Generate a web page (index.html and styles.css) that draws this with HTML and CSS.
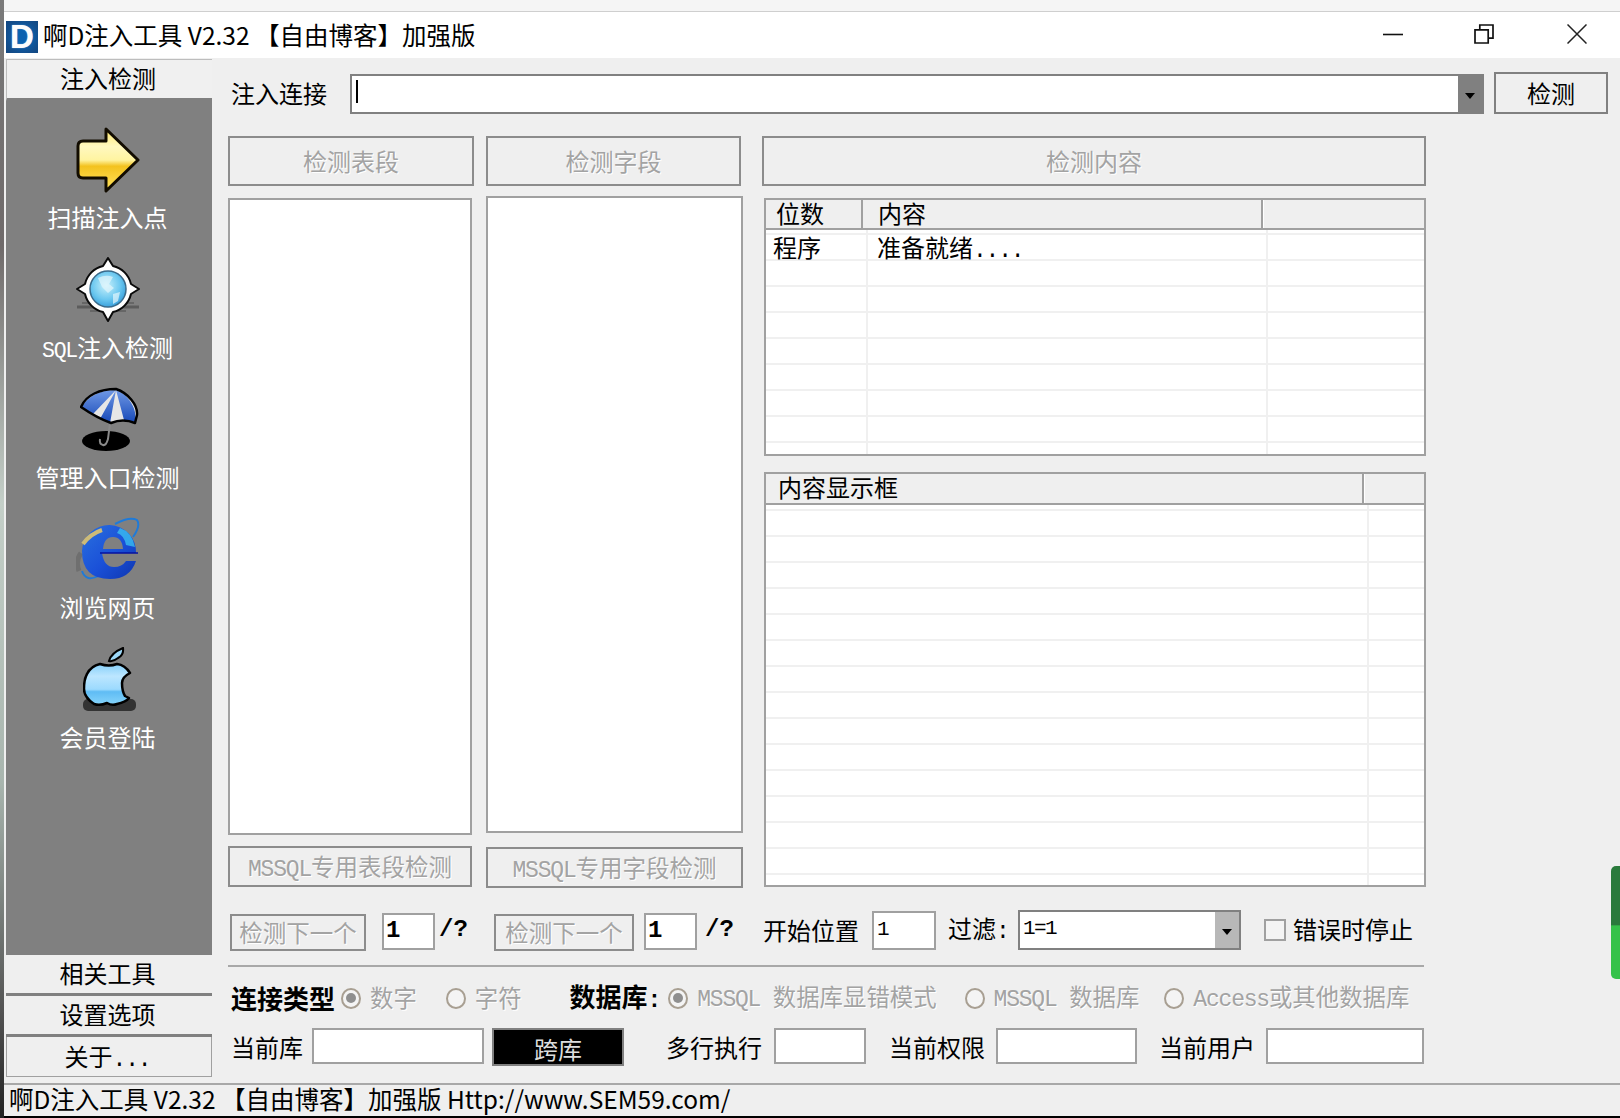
FILE: index.html
```html
<!DOCTYPE html>
<html lang="zh-CN">
<head>
<meta charset="utf-8">
<title>啊D注入工具 V2.32</title>
<link rel="stylesheet" href="styles.css">
</head>
<body>
<div class="desktop">
  <div class="edge"></div>
  <div class="window">
    <div class="topstrip"></div>
    <header class="titlebar">
      <div class="logo"><span>D</span></div>
      <div class="title">啊D注入工具 V2.32 【自由博客】加强版</div>
      <div class="controls">
        <svg class="ctl-min" width="20" height="20" viewBox="0 0 20 20"><path d="M0 10.5H20" stroke="#111" stroke-width="1.6" fill="none"/></svg>
        <svg class="ctl-max" width="20" height="20" viewBox="0 0 20 20"><path d="M1 5.8H14.2V19H1ZM5.8 5.8V1H19V14.2H14.2" stroke="#111" stroke-width="1.7" fill="none"/></svg>
        <svg class="ctl-close" width="20" height="20" viewBox="0 0 20 20"><path d="M.5 .5L19.5 19.5M19.5 .5L.5 19.5" stroke="#222" stroke-width="1.5" fill="none"/></svg>
      </div>
    </header>
    <div class="client">
      <aside class="sidebar">
        <div class="side-btn first">注入检测</div>
        <nav class="side-panel">
          <div class="side-item">
            <svg class="ico" width="64" height="66" viewBox="0 0 64 66">
              <defs><linearGradient id="ga" x1="0" y1="0" x2="0" y2="1"><stop offset="0" stop-color="#ffe96a"/><stop offset=".28" stop-color="#fff8c0"/><stop offset=".5" stop-color="#fff4a0"/><stop offset=".6" stop-color="#f3c21e"/><stop offset=".8" stop-color="#fbd440"/><stop offset="1" stop-color="#ffe25a"/></linearGradient></defs>
              <path d="M2 19Q2 14 7 14H30V2L62 33L30 64V51H7Q2 51 2 46Z" fill="url(#ga)" stroke="#120c00" stroke-width="3" stroke-linejoin="round"/>
            </svg>
            <div class="side-label">扫描注入点</div>
          </div>
          <div class="side-item">
            <svg class="ico" width="64" height="66" viewBox="0 0 64 66">
              <defs><radialGradient id="gb" cx=".45" cy=".4" r=".65"><stop offset="0" stop-color="#c9f1fb"/><stop offset=".6" stop-color="#6cc8f0"/><stop offset="1" stop-color="#2f98d8"/></radialGradient></defs>
              <path d="M1 50H63" stroke="#5c5c5c" stroke-width="3"/><path d="M6 46H58M14 54H50" stroke="#666" stroke-width="2"/>
              <path d="M32 1L37 9A24 24 0 0 1 55 27L63 32L55 37A24 24 0 0 1 37 55L32 64L27 55A24 24 0 0 1 9 37L1 32L9 27A24 24 0 0 1 27 9Z" fill="#fff" stroke="#0a0a0a" stroke-width="2" stroke-linejoin="round"/>
              <circle cx="32" cy="32" r="18" fill="url(#gb)" stroke="#3a6a8a" stroke-width="1.5"/>
              <path d="M22 21Q30 17 37 20L33 27L38 31L32 36L26 30ZM37 37L44 35L42 44L37 47Z" fill="#e4f7fc" opacity=".7"/>
            </svg>
            <div class="side-label"><span class="lat-s">SQL</span>注入检测</div>
          </div>
          <div class="side-item">
            <svg class="ico shift" width="60" height="66" viewBox="0 0 60 66">
              <defs><linearGradient id="gu" x1="0" y1="0" x2="0" y2="1"><stop offset="0" stop-color="#6f98e4"/><stop offset="1" stop-color="#1648b8"/></linearGradient></defs>
              <ellipse cx="26" cy="54" rx="24" ry="10" fill="#000"/>
              <path d="M30 36L28 52Q26 59 23 58Q19 57 20 52" fill="none" stroke="#8a8a8a" stroke-width="2"/>
              <path d="M1 20C6 8 20 2 36 2C48 6 58 18 57 28L55 36Q43 31 31 36Q17 31 1 20Z" fill="#e6e6e6"/>
              <path d="M36 3C20 3 8 9 2 20L13 27ZM36 3L20 32L30 36ZM36 3L44 33L55 35C58 22 48 7 36 3Z" fill="url(#gu)"/>
              <path d="M1 20C6 8 20 2 36 2C48 6 58 18 57 28L55 36Q43 31 31 36Q17 31 1 20Z" fill="none" stroke="#000" stroke-width="2.5" stroke-linejoin="round"/>
            </svg>
            <div class="side-label">管理入口检测</div>
          </div>
          <div class="side-item">
            <svg class="ico" width="64" height="66" viewBox="0 0 64 66">
              <defs><linearGradient id="gi" x1="0" y1="0" x2="1" y2="1"><stop offset="0" stop-color="#2a70de"/><stop offset=".55" stop-color="#1a50d8"/><stop offset="1" stop-color="#0e36b0"/></linearGradient></defs>
              <path d="M39 7Q54 -1 61 3Q65 9 57 20M6 54Q10 66 24 58" fill="none" stroke="#1f7ad8" stroke-width="2"/>
              <path d="M3 54Q-1 44 5 36" fill="none" stroke="#6f6f6f" stroke-width="5"/>
              <path d="M6 34A27 27 0 0 1 60 36H26Q28 50 38 50Q46 50 50 44H60Q54 62 34 62Q6 62 6 34ZM27 32H47Q46 20 37 20Q28 20 27 32Z" fill="url(#gi)" fill-rule="evenodd"/>
              <path d="M44 11Q56 15 59 30L50 28Q48 18 41 16Z" fill="#3cc4f2" opacity=".75"/>
              <path d="M24 36H62" stroke="#0610a0" stroke-width="1.6"/>
              <path d="M7 27Q14 17 26 13" fill="none" stroke="#cdbb78" stroke-width="4"/>
            </svg>
            <div class="side-label">浏览网页</div>
          </div>
          <div class="side-item">
            <svg class="ico shift" width="54" height="66" viewBox="0 0 54 66">
              <defs><linearGradient id="gp" x1="0" y1="0" x2="0" y2="1"><stop offset="0" stop-color="#86d0fa"/><stop offset=".3" stop-color="#bce6ff"/><stop offset=".62" stop-color="#9cdafe"/><stop offset=".68" stop-color="#5fbcf4"/><stop offset="1" stop-color="#86d4fb"/></linearGradient></defs>
              <rect x="0" y="52" width="53" height="12" rx="5" fill="#333"/>
              <path d="M17 17Q26 20 34 17Q42 18 47 26Q39 30 39 36Q39 44 42 49L46 51Q43 55 34 57Q29 59 24 56Q17 59 11 57Q1 50 1 42Q1 32 4 27Q8 19 17 17Z" fill="url(#gp)" stroke="#000" stroke-width="2.5" stroke-linejoin="round"/>
              <path d="M26 14Q28 6 40 1Q41 8 35 11Q30 15 26 14Z" fill="#9cd8f8" stroke="#000" stroke-width="2"/>
            </svg>
            <div class="side-label">会员登陆</div>
          </div>
        </nav>
        <div class="side-btn">相关工具</div>
        <div class="side-btn">设置选项</div>
        <div class="side-btn last">关于<span class="lat">...</span></div>
      </aside>
      <main class="main">
        <div class="url-row">
          <label class="url-label">注入连接</label>
          <div class="combo url-combo">
            <div class="combo-field"><i class="caret"></i></div>
            <div class="combo-arrow dark"><i></i></div>
          </div>
          <button class="btn url-btn">检测</button>
        </div>
        <div class="columns">
          <section class="col">
            <button class="btn off big" disabled>检测表段</button>
            <div class="listbox"></div>
            <button class="btn off mssql" disabled><span class="lat">MSSQL</span>专用表段检测</button>
          </section>
          <section class="col mid">
            <button class="btn off big" disabled>检测字段</button>
            <div class="listbox"></div>
            <button class="btn off mssql" disabled><span class="lat">MSSQL</span>专用字段检测</button>
          </section>
          <section class="col">
            <button class="btn off big wide" disabled>检测内容</button>
            <div class="lv lv-a">
              <div class="lv-head">
                <div class="lv-h h-pos">位数</div>
                <div class="lv-h h-con">内容</div>
                <div class="lv-h2"></div>
              </div>
              <div class="lv-body">
                <div class="lv-row"><span class="cell-a">程序</span><span class="cell-b">准备就绪<span class="lat">....</span></span></div>
              </div>
            </div>
            <div class="lv lv-b">
              <div class="lv-head">
                <div class="lv-h h-show">内容显示框</div>
                <div class="lv-h2"></div>
              </div>
              <div class="lv-body"></div>
            </div>
          </section>
        </div>
        <div class="nav-row">
          <button class="btn off next n1" disabled>检测下一个</button>
          <div class="field small n2 mono-b">1</div>
          <span class="of">/?</span>
          <button class="btn off next n3" disabled>检测下一个</button>
          <div class="field small n4 mono-b">1</div>
          <span class="of">/?</span>
          <span class="txt n5">开始位置</span>
          <div class="field n6 mono-t">1</div>
          <span class="txt n7">过滤<span class="lat">:</span></span>
          <div class="combo n8">
            <div class="combo-field mono-t">1=1</div>
            <div class="combo-arrow"><i></i></div>
          </div>
          <i class="check n9"></i>
          <span class="txt n10">错误时停止</span>
        </div>
        <hr class="rule">
        <div class="opt-row">
          <b class="strong">连接类型</b>
          <i class="radio on o1"></i><span class="opt t1">数字</span>
          <i class="radio o2"></i><span class="opt t2">字符</span>
          <b class="strong o3">数据库<span class="lat">:</span></b>
          <i class="radio on o4"></i><span class="opt t3"><span class="lat sp">MSSQL </span>数据库显错模式</span>
          <i class="radio o5"></i><span class="opt t4"><span class="lat sp">MSSQL </span>数据库</span>
          <i class="radio o6"></i><span class="opt t5"><span class="lat">Access</span>或其他数据库</span>
        </div>
        <div class="info-row">
          <span class="txt i1">当前库</span>
          <div class="field i2"></div>
          <button class="cross i3">跨库</button>
          <span class="txt i4">多行执行</span>
          <div class="field i5"></div>
          <span class="txt i6">当前权限</span>
          <div class="field i7"></div>
          <span class="txt i8">当前用户</span>
          <div class="field i9"></div>
        </div>
      </main>
    </div>
    <footer class="status">啊D注入工具 V2.32 【自由博客】加强版 Http://www.SEM59.com/</footer>
    <div class="blackline"></div>
  </div>
  <div class="greenbar"></div>
</div>
</body>
</html>
```
FILE: styles.css
```css
* { box-sizing: border-box; }
html, body { margin: 0; padding: 0; }
body {
  width: 1620px; height: 1118px; overflow: hidden;
  font-family: "Noto Sans CJK SC", "Noto Sans", sans-serif;
  font-size: 24px; line-height: 1; color: #000; background: #efefef;
}
.desktop { position: relative; display: flex; width: 1620px; height: 1118px; }
.edge { width: 4px; background: linear-gradient(#7a7a7a 0, #6f6a6a 22%, #c4cfc8 45%, #a8b5ae 70%, #555 90%, #222 100%); }
.window { flex: 1; display: flex; flex-direction: column; min-width: 0; }
.topstrip { height: 12px; background: #f5f5f5; border-bottom: 1px solid #cfcfcf; }

.titlebar { height: 46px; background: #fff; display: flex; align-items: center; padding-left: 2px; }
.logo {
  width: 32px; height: 32px; margin-top: 4px;
  background: radial-gradient(circle at 52% 50%, #0a62b0 30%, #134f8e 70%, #12467f 100%);
  display: flex; align-items: center; justify-content: center;
}
.logo span { font: 900 33px/32px "Liberation Sans", sans-serif; color: #fdfdfd; text-shadow: 0 0 1px #cfe2f2; }
.title { margin-left: 5px; font-size: 24.5px; line-height: 46px; white-space: nowrap; }
.controls { margin-left: auto; display: flex; align-items: center; padding-right: 33px; margin-top: -2px; }
.ctl-max { margin-left: 71px; }
.ctl-close { margin-left: 73px; }

.client { height: 1025px; display: flex; padding: 1px 0 0 2px; background: #efefef; }
.sidebar { width: 206px; height: 1018px; display: flex; flex-direction: column; flex: none; }
.side-btn {
  height: 41px; background: #efefef; border-bottom: 3px solid #808080; text-align: center;
  font-size: 24px; line-height: 36px; padding-right: 3px;
}
.side-btn.first { height: 42px; border-top: 1px solid #bdbdbd; border-left: 1px solid #bdbdbd; background: #f0f0f0; }
.side-btn.last { height: 40px; border: 1px solid #a0a0a0; border-top: 0; line-height: 38px; }
.side-panel { flex: 1; background: #808080; padding: 26px 3px 0 0; overflow: hidden; }
.side-item { height: 130px; display: flex; flex-direction: column; align-items: center; }
.ico { display: block; height: 66px; flex: none; }
.ico.shift { transform: translateX(2px); }
.side-label { margin-top: 11px; color: #fff; font-size: 24px; line-height: 26px; white-space: nowrap; }

.lat { font-family: "Liberation Mono", monospace; font-size: 23px; letter-spacing: -1.2px; }
.lat.sp { white-space: pre; }
.lat-s { font-family: "Liberation Mono", monospace; font-size: 21.5px; letter-spacing: -1.2px; }

.main { width: 1380px; margin-left: 16px; flex: none; }
.btn {
  display: block; margin: 0; padding: 0; background: #efefef; border: 2px solid #808080;
  font: inherit; color: #000; text-align: center; white-space: nowrap;
}
.btn.off { color: #a3a3a3; text-shadow: 1px 1px 0 #fff; border-color: #8c8c8c; }

.url-row { display: flex; align-items: flex-start; height: 55px; padding-top: 13px; }
.url-label { margin-left: 3px; width: 119px; height: 42px; line-height: 42px; flex: none; }
.combo { display: flex; height: 40px; border: 2px solid #808080; background: #fff; flex: none; }
.url-combo { width: 1134px; height: 40px; margin-top: 2px; }
.combo-field { flex: 1; padding-left: 4px; }
.caret { display: block; width: 2px; height: 23px; margin-top: 4px; background: #000; }
.combo-arrow { width: 24px; background: #b8b8b8; display: flex; align-items: center; justify-content: center; }
.combo-arrow.dark { background: #808080; }
.combo-arrow i { display: block; width: 0; height: 0; margin-top: 3px; border: 5px solid transparent; border-top: 6px solid #000; border-bottom: 0; }
.url-btn { width: 114px; height: 42px; margin-left: 10px; line-height: 36px; flex: none; }

.columns { display: grid; grid-template-columns: 246px 257px 669px; column-gap: 13px; width: 1198px; height: 795px; padding-top: 22px; }
.columns > .col:last-child { margin-left: 5px; }
.col { display: flex; flex-direction: column; height: 752px; }
.big { height: 50px; width: 100%; flex: none; }
.mid .big { width: 255px; margin-left: -1px; }
.listbox { height: 637px; margin-top: 12px; margin-right: 2px; background: #fff; border: 2px solid #a0a0a0; flex: none; }
.mid .listbox { margin: 10px 1px 0 -1px; }
.mssql { height: 41px; margin-top: 11px; width: 244px; font-size: 23.5px; padding-top: 3px; flex: none; }
.mid .mssql { width: 257px; margin-top: 14px; margin-left: -1px; }

.lv { margin-left: 2px; border: 2px solid #a0a0a0; display: flex; flex-direction: column; background: #fff; flex: none; }
.lv-a { height: 258px; margin-top: 12px; }
.lv-b { height: 415px; margin-top: 16px; }
.lv-head { display: flex; height: 30px; background: #efefef; border-bottom: 2px solid #a0a0a0; flex: none; }
.lv-b .lv-head { height: 31px; }
.lv-h { border-right: 2px solid #a0a0a0; line-height: 26px; white-space: nowrap; }
.h-pos { width: 97px; padding-left: 10px; }
.h-con { width: 400px; padding-left: 15px; }
.h-show { width: 598px; padding-left: 12px; }
.lv-h2 { flex: 1; border-left: 1px solid #fff; }
.lv-body {
  flex: 1;
  background-color: #fff;
  background-image: linear-gradient(#f0f0f0, #f0f0f0), linear-gradient(#f0f0f0, #f0f0f0), repeating-linear-gradient(#f0f0f0 0 2px, #fff 2px 26px);
  background-size: 2px 100%, 2px 100%, 100% 100%;
  background-position: 100px 0, 500px 0, 0 3px;
  background-repeat: no-repeat;
}
.lv-b .lv-body { background-position: -20px 0, 601px 0, 0 4px; }
.lv-row { display: flex; height: 26px; padding-top: 4px; line-height: 26px; }
.cell-a { width: 105px; padding-left: 7px; }
.cell-b { padding-left: 6px; }

.field { background: #fff; border: 2px solid #a0a0a0; flex: none; }
.nav-row { display: flex; align-items: center; height: 44px; margin-top: -1px; padding-left: 2px; font-size: 24px; }
.next { width: 136px; height: 37px; margin-top: 5px; line-height: 33px; font-size: 23.5px; flex: none; }
.small { width: 53px; height: 37px; margin-top: 3px; }
.n2 { margin-left: 16px; }
.n3 { width: 140px; margin-left: 25px; }
.n4 { margin-left: 10px; }
.of { margin-left: 4px; width: 30px; font: 700 24px/1 "Liberation Mono", monospace; flex: none; }
.n4 + .of { margin-left: 8px; }
.mono-b { font: 700 24px/32px "Liberation Mono", monospace; padding-left: 2px; }
.mono-t { font-family: "Liberation Mono", monospace; font-size: 21px; letter-spacing: -1.6px; line-height: 33px; padding-left: 3px; }
.txt { white-space: nowrap; flex: none; }
.n5 { margin-left: 28px; }
.n6 { width: 64px; height: 39px; margin-left: 13px; }
.n7 { margin-left: 12px; width: 57px; }
.n8 { width: 223px; margin-left: 13px; }
.n9 { display: block; width: 22px; height: 22px; margin-left: 23px; border: 2px solid #a0a0a0; background: #f4f4f4; flex: none; }
.n10 { margin: -3px 0 0 7px; }
.rule { margin: 13px 0 0; width: 1196px; border: 0; height: 2px; background: #a8a8a8; }
.opt-row { display: flex; align-items: center; height: 26px; margin-top: 18px; padding-left: 3px; font-size: 23.4px; }
.strong { font-weight: 700; font-size: 26px; white-space: nowrap; }
.radio { display: block; flex: none; width: 20px; height: 21px; border: 2px solid #a89f92; border-radius: 50%; background: #f4f4f4; position: relative; }
.radio.on::after { content: ""; position: absolute; left: 3px; top: 3.5px; width: 10px; height: 10px; border-radius: 50%; background: #8f8f8f; }
.opt { color: #a3a3a3; text-shadow: 1px 1px 0 #fff; white-space: nowrap; margin-left: 9px; }
.o1 { margin-left: 6px; }
.o2 { margin-left: 29px; }
.o3 { margin-left: 48px; }
.o4 { margin-left: 8px; }
.o5 { margin-left: 28px; }
.o6 { margin-left: 25px; }
.info-row { display: flex; align-items: flex-start; margin-top: 17px; padding-left: 3px; height: 38px; }
.info-row .txt { line-height: 35px; margin-top: 1px; }
.info-row .field { height: 36px; }
.i2 { width: 172px; margin-left: 9px; }
.cross { width: 132px; height: 38px; margin: 0 0 0 8px; padding: 0; border: 2px solid #808080; background: #000; color: #ddd; font: inherit; line-height: 38px; flex: none; }
.i4 { margin-left: 42px; }
.i5 { width: 92px; margin-left: 12px; }
.i6 { margin-left: 23px; }
.i7 { width: 141px; margin-left: 11px; }
.i8 { margin-left: 22px; }
.i9 { width: 158px; margin-left: 11px; }

.status { height: 33px; background: #efefef; border-top: 2px solid #a8a8a8; padding-left: 5px; font-size: 24.5px; line-height: 27px; white-space: nowrap; }
.blackline { height: 2px; background: #000; }
.greenbar { position: absolute; right: 0; top: 866px; width: 9px; height: 113px; border-radius: 5px 0 0 5px; background: linear-gradient(#2a7a3c 0, #2a7a3c 52%, #35c24a 53%, #35c24a 100%); }
```
